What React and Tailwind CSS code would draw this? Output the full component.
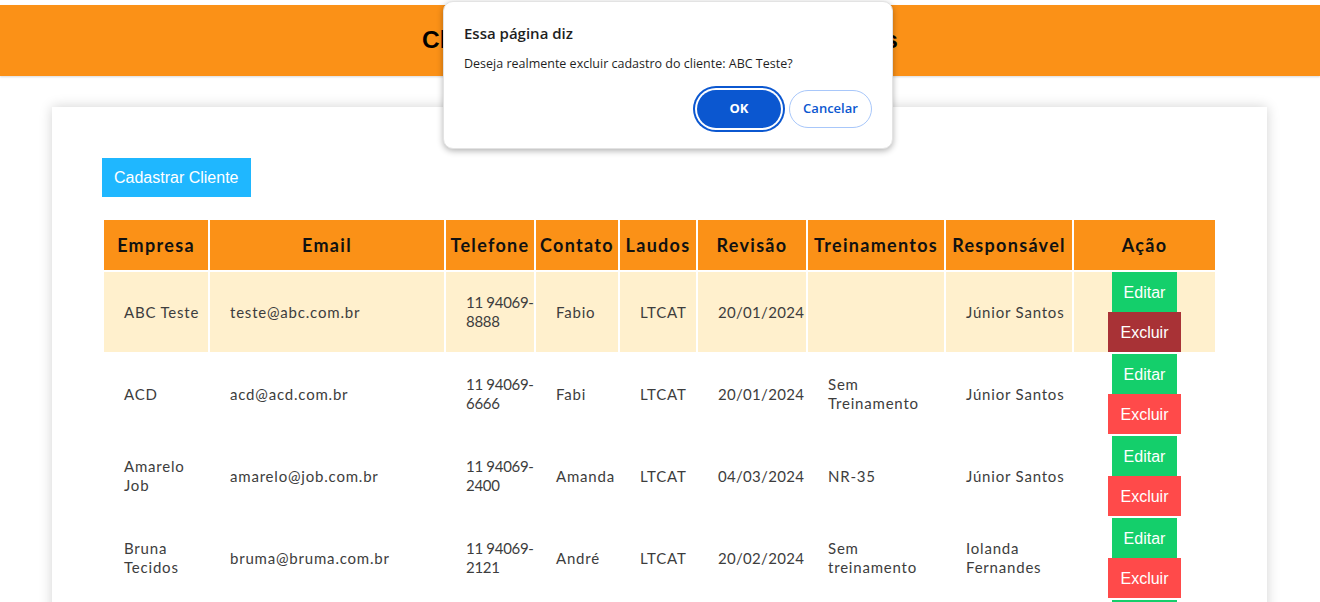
import React from "react";

const rows = [
  { empresa: ["ABC Teste"], email: "teste@abc.com.br", tel: ["11 94069-", "8888"], contato: "Fabio", laudos: "LTCAT", rev: "20/01/2024", trein: [], resp: ["Júnior Santos"], active: true },
  { empresa: ["ACD"], email: "acd@acd.com.br", tel: ["11 94069-", "6666"], contato: "Fabi", laudos: "LTCAT", rev: "20/01/2024", trein: ["Sem", "Treinamento"], resp: ["Júnior Santos"] },
  { empresa: ["Amarelo", "Job"], email: "amarelo@job.com.br", tel: ["11 94069-", "2400"], contato: "Amanda", laudos: "LTCAT", rev: "04/03/2024", trein: ["NR-35"], resp: ["Júnior Santos"] },
  { empresa: ["Bruna", "Tecidos"], email: "bruma@bruma.com.br", tel: ["11 94069-", "2121"], contato: "André", laudos: "LTCAT", rev: "20/02/2024", trein: ["Sem", "treinamento"], resp: ["Iolanda", "Fernandes"] },
  { empresa: ["Casa", "Verde"], email: "casa@verde.com.br", tel: ["11 94069-", "3030"], contato: "Carla", laudos: "LTCAT", rev: "10/02/2024", trein: ["NR-10"], resp: ["Júnior Santos"] },
];

const headers = ["Empresa", "Email", "Telefone", "Contato", "Laudos", "Revisão", "Treinamentos", "Responsável", "Ação"];
const widths = ["w-[104px]", "w-[234px]", "w-[88px]", "w-[82px]", "w-[76px]", "w-[108px]", "w-[136px]", "w-[126px]", "w-[141px]"];

function Lines({ items, className = "" }) {
  return (
    <>
      {items.map((l, i) => (
        <span key={i} className={"block whitespace-nowrap " + className}>{l}</span>
      ))}
    </>
  );
}

export default function App() {
  return (
    <div className="relative min-h-[602px] bg-white pt-[5px] font-['Liberation_Sans',Arial,sans-serif]">
      <header className="flex h-[71px] items-center justify-center bg-[#fb9117] shadow-[0_1px_2px_rgba(0,0,0,0.15)]">
        <h1 className="text-[24.4px] font-bold text-black">Clientes Cadastrados e Laudos Técnicos</h1>
      </header>

      <main className="ml-[52px] mt-[31px] w-[1215px] bg-white px-[50px] pt-[51px] pb-[40px] shadow-[0_0_12px_rgba(0,0,0,0.18)]">
        <button className="bg-[#1fb7ff] px-[12px] py-[10px] text-[16px] leading-[19px] text-white">Cadastrar Cliente</button>

        <table className="mt-[21px] w-[1115px] table-fixed border-separate border-spacing-[2px] font-['Lato','Open_Sans',sans-serif]">
          <colgroup>
            {widths.map((w, i) => (
              <col key={i} className={w} />
            ))}
          </colgroup>
          <thead>
            <tr>
              {headers.map((h) => (
                <th key={h} className="h-[50px] bg-[#fb9117] px-0 text-center text-[18px] font-bold tracking-[1.3px] text-[#111]">
                  {h}
                </th>
              ))}
            </tr>
          </thead>
          <tbody className="text-[15px] leading-[19px] tracking-[0.8px] text-[#3d3d3d]">
            {rows.map((r, i) => (
              <tr key={i} className={r.active ? "bg-[#fff0cd]" : "bg-white"}>
                <td className="pl-[20px] pr-0 align-middle"><Lines items={r.empresa} /></td>
                <td className="pl-[20px] pr-0 align-middle"><Lines items={[r.email]} /></td>
                <td className="pl-[20px] pr-0 align-middle"><Lines items={r.tel} className="tracking-[-0.3px]" /></td>
                <td className="pl-[20px] pr-0 align-middle"><Lines items={[r.contato]} /></td>
                <td className="pl-[20px] pr-0 align-middle"><Lines items={[r.laudos]} /></td>
                <td className="pl-[20px] pr-0 align-middle"><Lines items={[r.rev]} className="tracking-[0.3px]" /></td>
                <td className="pl-[20px] pr-0 align-middle"><Lines items={r.trein} /></td>
                <td className="pl-[20px] pr-0 align-middle"><Lines items={r.resp} /></td>
                <td className="p-0 align-middle">
                  <div className="flex flex-col items-center font-['Liberation_Sans',Arial,sans-serif] tracking-normal">
                    <button className="h-[40px] bg-[#14cf6b] px-[12px] text-[16px] text-white">Editar</button>
                    <button className={(r.active ? "bg-[#a83236]" : "bg-[#ff4a4a]") + " h-[40px] px-[12px] text-[16px] text-white"}>Excluir</button>
                  </div>
                </td>
              </tr>
            ))}
          </tbody>
        </table>
      </main>

      <div className="absolute left-[443px] top-[1px] w-[450px] rounded-[10px] border border-[#e3e3e3] bg-white px-[20px] pb-[20px] pt-[21px] font-['Open_Sans','Noto_Sans',sans-serif] text-[#1f1f1f] shadow-[0_2px_6px_rgba(0,0,0,0.3)]">
        <div className="text-[15px] font-semibold leading-[20px]">Essa página diz</div>
        <div className="mt-[12px] text-[12.5px] leading-[18px]">Deseja realmente excluir cadastro do cliente: ABC Teste?</div>
        <div className="mt-[17px] flex justify-end gap-[8px]">
          <button className="h-[38px] w-[84px] rounded-full bg-[#0b57d0] text-[13px] font-bold text-white ring-2 ring-[#0b57d0] ring-offset-2 ring-offset-white">OK</button>
          <button className="h-[38px] w-[83px] rounded-full border border-[#a8c7fa] bg-white text-[13px] font-semibold text-[#0b57d0]">Cancelar</button>
        </div>
      </div>
    </div>
  );
}
